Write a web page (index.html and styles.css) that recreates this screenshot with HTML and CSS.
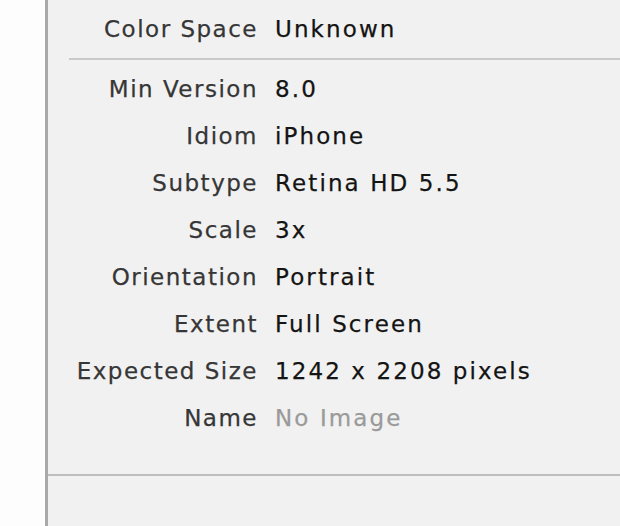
FILE: index.html
```html
<!DOCTYPE html>
<html lang="en">
<head>
    <meta charset="UTF-8">
    <meta name="viewport" content="width=device-width, initial-scale=1.0">
    <title>Image Set Inspector</title>
    <link rel="stylesheet" href="styles.css">
</head>
<body>
    <div class="window">
        <div class="gutter"></div>
        <main class="inspector">
            <section class="group group-top">
                <div class="row">
                    <span class="label">Color Space</span>
                    <span class="value">Unknown</span>
                </div>
            </section>

            <hr class="divider">

            <section class="group">
                <div class="row">
                    <span class="label">Min Version</span>
                    <span class="value">8.0</span>
                </div>
                <div class="row">
                    <span class="label">Idiom</span>
                    <span class="value">iPhone</span>
                </div>
                <div class="row">
                    <span class="label">Subtype</span>
                    <span class="value">Retina HD 5.5</span>
                </div>
                <div class="row">
                    <span class="label">Scale</span>
                    <span class="value">3x</span>
                </div>
                <div class="row">
                    <span class="label">Orientation</span>
                    <span class="value">Portrait</span>
                </div>
                <div class="row">
                    <span class="label">Extent</span>
                    <span class="value">Full Screen</span>
                </div>
                <div class="row">
                    <span class="label">Expected Size</span>
                    <span class="value">1242 x 2208 pixels</span>
                </div>
                <div class="row">
                    <span class="label">Name</span>
                    <span class="value value-empty">No Image</span>
                </div>
            </section>

            <hr class="divider divider-full">
        </main>
    </div>
</body>
</html>
```

FILE: styles.css
```css
body {
    margin: 0;
    padding: 0;
    font-family: 'DejaVu Sans', Verdana, sans-serif;
    background-color: #ffffff;
}

.window {
    display: flex;
    height: 526px;
    overflow: hidden;
}

.gutter {
    width: 45px;
    background-color: #fdfdfd;
}

.inspector {
    flex: 1;
    background-color: #f1f1f1;
    border-left: 3px solid #a9a9a9;
}

.group-top {
    padding-top: 6px;
}

.row {
    display: grid;
    grid-template-columns: 210px 1fr;
    column-gap: 17px;
    height: 47px;
    line-height: 47px;
    font-size: 23px;
    white-space: nowrap;
    -webkit-text-stroke: 0.25px currentColor;
}

.label {
    text-align: right;
    color: #363636;
    letter-spacing: 1.5px;
}

.value {
    color: #141414;
    letter-spacing: 2.1px;
}

.value-empty {
    color: #9a9a9a;
}

.divider {
    margin: 5px 0 6px 21px;
    height: 2px;
    border: none;
    background-color: #c9c9c9;
}

.divider-full {
    margin: 32px 0 0 0;
    background-color: #bdbdbd;
}
```
